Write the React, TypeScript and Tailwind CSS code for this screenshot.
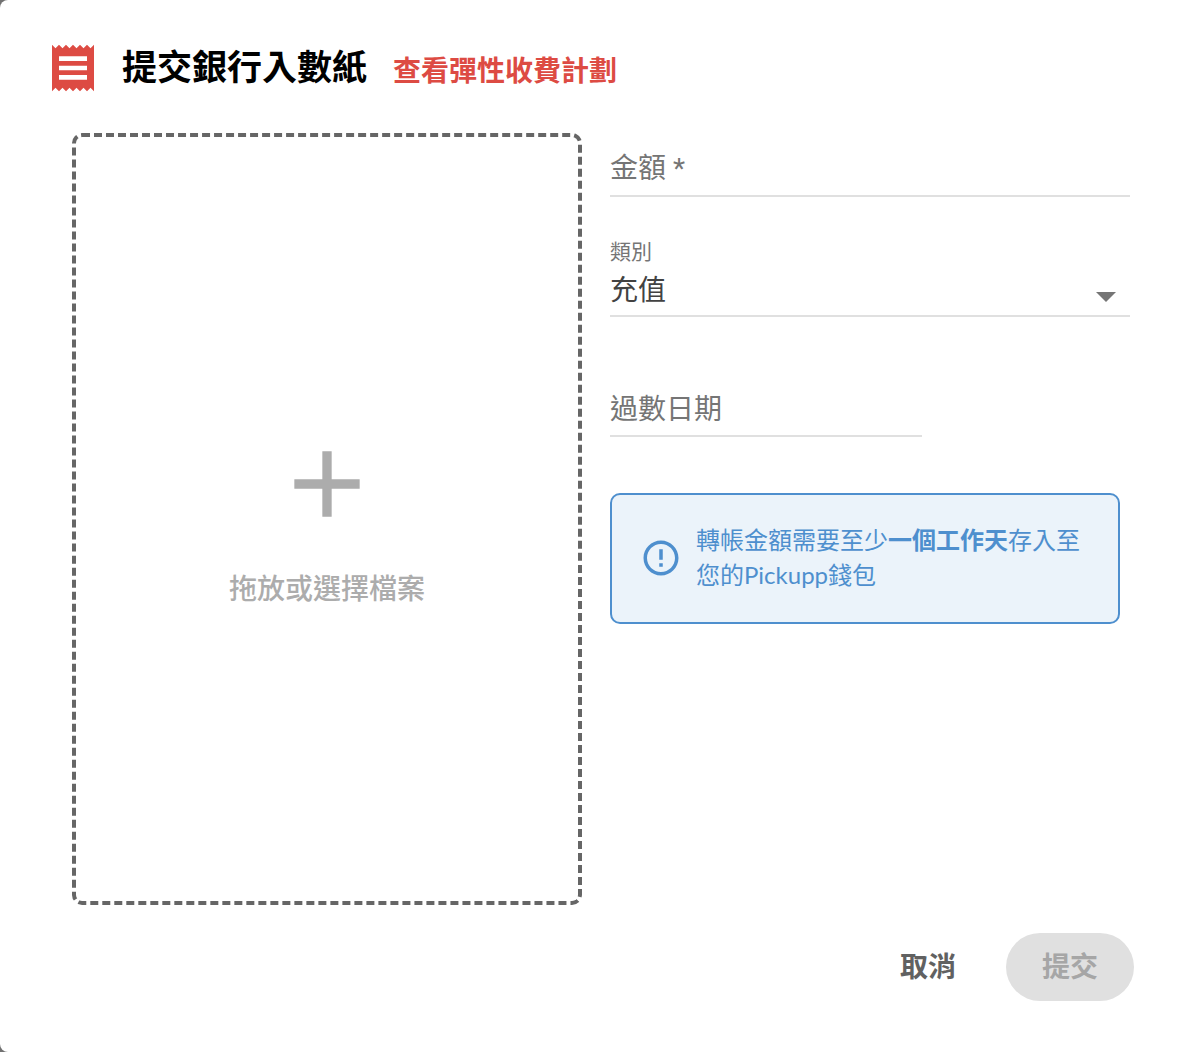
import React from "react";

function ReceiptIcon() {
  return (
    <svg viewBox="0 0 24 24" className="size-14 shrink-0 fill-[#dd4b43]" aria-hidden="true">
      <path d="M18 17H6v-2h12v2zm0-4H6v-2h12v2zm0-4H6V7h12v2zM3 22l1.5-1.5L6 22l1.5-1.5L9 22l1.5-1.5L12 22l1.5-1.5L15 22l1.5-1.5L18 22l1.5-1.5L21 22V2l-1.5 1.5L18 2l-1.5 1.5L15 2l-1.5 1.5L12 2l-1.5 1.5L9 2 7.5 3.5 6 2 4.5 3.5 3 2v20z" />
    </svg>
  );
}

function Header() {
  return (
    <header className="flex items-center pt-10 pl-[45px]">
      <ReceiptIcon />
      <h1 className="ml-[21px] pb-1 text-[35px] leading-[52px] font-bold text-black">提交銀行入數紙</h1>
      <a href="#plans" className="ml-[26px] pt-1 text-[28px] leading-[52px] font-bold text-[#dd4b43]">
        查看彈性收費計劃
      </a>
    </header>
  );
}

function DropZone() {
  return (
    <label className="flex cursor-pointer flex-col items-center justify-center gap-[26px] rounded-[10px] border-4 border-dashed border-[#666666] text-[#acacac]">
      <input type="file" className="sr-only" />
      <svg viewBox="0 0 24 24" className="size-28 fill-current" aria-hidden="true">
        <path d="M19 13h-6v6h-2v-6H5v-2h6V5h2v6h6v2z" />
      </svg>
      <span className="text-[28px] leading-[44px] font-medium">拖放或選擇檔案</span>
    </label>
  );
}

function Notice() {
  return (
    <div
      role="note"
      className="mt-14 mr-[10px] flex items-center gap-[14px] rounded-[10px] border-2 border-[#4e8fce] bg-[#ebf3fa] px-7 pt-[27px] pb-[30px] text-[#4e8fce]"
    >
      <svg viewBox="0 0 24 24" className="mt-0.5 size-[42px] shrink-0 fill-current" aria-hidden="true">
        <path d="M11 15h2v2h-2zm0-8h2v6h-2zm.99-5C6.47 2 2 6.48 2 12s4.47 10 9.99 10C17.52 22 22 17.52 22 12S17.52 2 11.99 2zM12 20c-4.42 0-8-3.58-8-8s3.58-8 8-8 8 3.58 8 8-3.58 8-8 8z" />
      </svg>
      <p className="text-[24px] leading-[35px]">
        轉帳金額需要至少<strong className="font-bold">一個工作天</strong>存入至您的Pickupp錢包
      </p>
    </div>
  );
}

type TextFieldProps = { id: string; label: string; required?: boolean; className: string };

function TextField({ id, label, required, className }: TextFieldProps) {
  return (
    <div className={`grid h-16 border-b-2 border-[#e0e0e0] ${className}`}>
      <input
        id={id}
        type="text"
        required={required}
        className="peer col-start-1 row-start-1 w-full bg-transparent pt-2 text-[28px] text-[#424242] outline-none"
      />
      <label
        htmlFor={id}
        className="pointer-events-none col-start-1 row-start-1 self-center pt-2 text-[28px] leading-[40px] text-[#757575] peer-focus:invisible"
      >
        {label}
        {required && <span className="font-[Roboto,sans-serif]"> *</span>}
      </label>
    </div>
  );
}

function Fields() {
  return (
    <div className="flex flex-col">
      <TextField id="amount" label="金額" required className="w-full" />

      <label htmlFor="category" className="mt-[37px] text-[21px] leading-[33px] text-[#757575]">
        類別
      </label>
      <div className="relative">
        <select
          id="category"
          defaultValue="topup"
          className="block h-[50px] w-full appearance-none border-b-2 border-[#e0e0e0] bg-transparent pb-1 text-[28px] text-[#424242] outline-none"
        >
          <option value="topup">充值</option>
        </select>
        <svg
          viewBox="7 10 10 5"
          className="pointer-events-none absolute right-[14px] bottom-[15px] h-[10px] w-5 fill-[#757575]"
          aria-hidden="true"
        >
          <path d="M7 10l5 5 5-5z" />
        </svg>
      </div>

      <TextField id="date" label="過數日期" className="mt-14 w-3/5" />

      <Notice />
    </div>
  );
}

export default function App() {
  return (
    <div className="bg-[#717171] font-[Lato,'Noto_Sans_CJK_TC',sans-serif]">
      <form
        onSubmit={(e: React.FormEvent) => e.preventDefault()}
        className="flex min-h-screen flex-col rounded-l-lg bg-white"
      >
        <Header />
        <div className="mt-[37px] grid flex-1 grid-cols-[51fr_52fr] gap-7 pr-[52px] pl-[72px]">
          <DropZone />
          <Fields />
        </div>
        <footer className="mt-7 mb-[51px] flex justify-end gap-[14px] pr-12">
          <button type="button" className="h-[68px] rounded-full px-9 pb-0.5 text-[28px] font-bold text-[#616161]">
            取消
          </button>
          <button
            type="submit"
            disabled
            className="h-[68px] rounded-full bg-[#e0e0e0] px-9 pb-0.5 text-[28px] font-bold text-[#a6a6a6]"
          >
            提交
          </button>
        </footer>
      </form>
    </div>
  );
}
